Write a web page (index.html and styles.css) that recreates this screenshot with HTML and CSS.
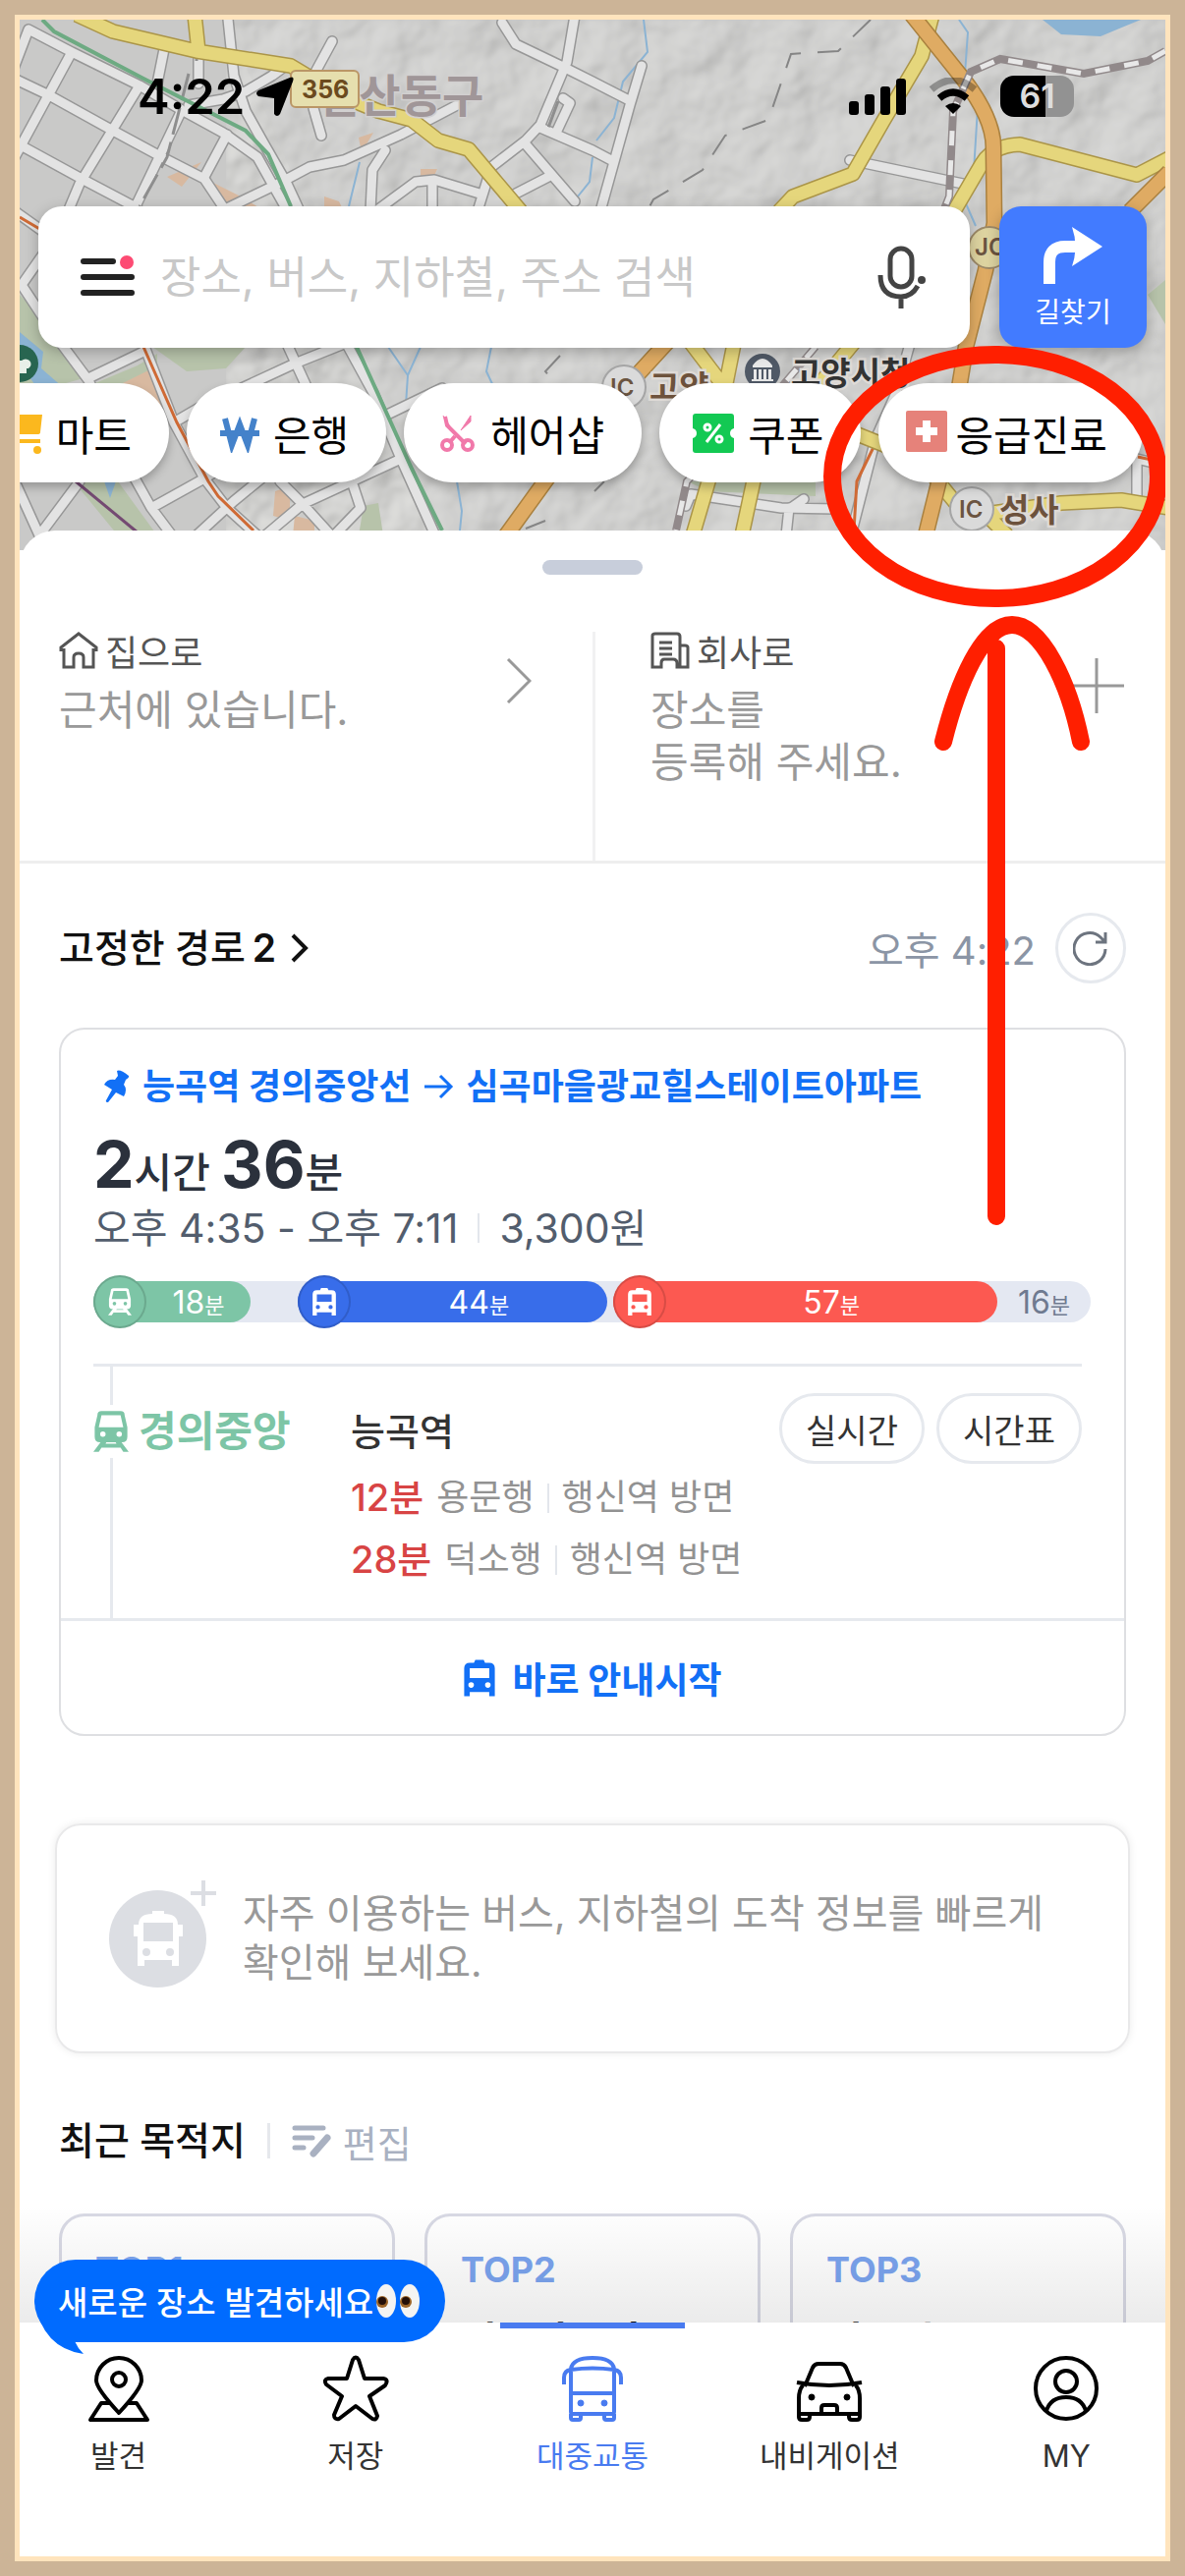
FILE: index.html
```html
<!DOCTYPE html>
<html lang="ko">
<head>
    <meta charset="UTF-8">
    <meta name="viewport" content="width=device-width, initial-scale=1.0">
    <title>대중교통</title>
    <link rel="stylesheet" href="styles.css">
</head>
<body>
  <!-- Shared icons -->
  <svg class="defs" aria-hidden="true">
    <symbol id="bus" viewBox="0 0 24 26">
      <path fill-rule="evenodd" d="M5 2h3l1-2h6l1 2h3q4 0 4 4v20h-4v-3H5v3H1V6q0-4 4-4zM5 6v7h14V6zM6 16a2 2 0 1 0 0 4a2 2 0 1 0 0-4zM18 16a2 2 0 1 0 0 4a2 2 0 1 0 0-4z"/>
    </symbol>
    <symbol id="train" viewBox="0 0 26 30">
      <path fill-rule="evenodd" d="M6 0h14q3 0 3 3l2 9v7q0 4-4 4H5q-4 0-4-4v-7l2-9q0-3 3-3zM6 3L4 12h18L20 3zM7 15a2 2 0 1 0 0 4a2 2 0 1 0 0-4zM19 15a2 2 0 1 0 0 4a2 2 0 1 0 0-4z"/>
      <path d="M6 22h4l-1 2h8l-1-2h4l6 8h-4l-2-3H6l-2 3H0z"/>
    </symbol>
  </svg>

  <div class="phone">
    <main>
      <!-- Map + search -->
      <header class="hero">
        <svg class="map" viewBox="20 20 1166 540" preserveAspectRatio="xMidYMin slice" aria-hidden="true">
          <defs>
            <filter id="relief" x="0" y="0" width="100%" height="100%">
              <feTurbulence type="fractalNoise" baseFrequency="0.014" numOctaves="4" seed="7"/>
              <feDiffuseLighting surfaceScale="9" diffuseConstant="1" lighting-color="#dededc">
                <feDistantLight azimuth="225" elevation="62"/>
              </feDiffuseLighting>
              <feGaussianBlur stdDeviation="2"/>
            </filter>
            <g id="roads" fill="none" stroke-linejoin="round" stroke-linecap="round">
              <path d="M29 30L73 53L142 87L185 112L227 135L262 160L277 187L290 210M29 30L10 80M73 53L15 160M142 87L81 187L65 225M185 112L138 210M10 78L50 97L115 133L165 160L208 182L230 215M10 142L85 183L140 212"/>
              <path d="M231 10L238 77L250 113L269 147L292 187L305 215M167 50L160 85M202 50V85M231 137L208 180M192 107L227 101L250 93L277 77L292 66M338 42L319 77M319 110L327 138M231 212L285 186L315 170L350 163L408 137L469 105M392 153L379 173L377 215M385 213L423 185L442 183L488 197M440 187V215M486 215L500 170L535 143L550 127L577 63L586 10"/>
              <path d="M511 23L525 45L573 68L603 83L642 103M550 130L603 153L622 163M535 147L585 205M525 197L558 180M573 100L580 105L566 135M653 67L641 107L611 215M865 163L980 187"/>
              <path d="M15 215L50 240M50 250L22 290L55 340L90 387L135 483L154 517L175 545M90 385L146 358M146 350L177 430L208 487L231 517L262 545M177 430L220 405L246 395L300 370L350 350M292 350L315 400M154 517L208 487L260 455M200 545L238 510L266 487M285 490L308 513L337 545M270 545L308 513L358 490L408 467M358 490L367 517L340 545M350 345L380 400L408 467L443 545M392 423L450 395M81 490L40 545M15 490L40 545"/>
              <path d="M926 350L912 400L891 447L866 545M703 503L795 517L850 518M703 503L698 515M803 517L800 545M805 517L818 508M1157 467V510M1157 467L1190 475"/>
            </g>
            <g id="yellow" fill="none" stroke-linejoin="round">
              <path d="M78 15L115 32L200 52L296 67L346 97L385 113L419 122L446 143L477 152L530 215M198 15L202 52"/>
              <path d="M949 15L938 57L899 123L868 177L807 200L793 215M968 220L999 167Q1010 148 1038 147L1157 178L1190 161"/>
              <path d="M700 345L738 395L748 345M872 345L835 390M724 480L705 545M769 480L755 545M870 441L900 453L949 483L975 515L1010 522L1080 512L1141 509L1190 517M1005 525L1025 545"/>
            </g>
            <g id="orange" fill="none" stroke-linejoin="round">
              <path d="M928 15L980 80Q1011 120 1011 150L1012 227L1003 275L983 353L976 395L958 480L942 545M1190 175L1150 215M682 345L650 380M562 480L515 545"/>
            </g>
          </defs>
          <rect x="20" y="20" width="1166" height="540" fill="#c9c9c8"/>
          <path d="M230 20H1186V560H440L350 300Z" filter="url(#relief)"/>
          <path d="M230 20H1186V560H440L350 300Z" fill="#cbcbca" opacity=".3"/>
          <g fill="#b7c3aa">
            <path d="M20 300L55 335L85 385L60 392H20ZM92 392L140 372L160 360V400ZM155 353H250L230 375L190 378ZM75 490H120L160 545H120ZM370 515L385 512L390 545H365ZM700 490H830V505L720 500Z"/>
            <path d="M1168 300L1186 285V330Z"/>
          </g>
          <g fill="#d8b9a0">
            <path d="M125 390L155 375L170 425H140ZM170 180L205 165L185 190ZM215 185L245 200L270 215H235ZM428 172H445L440 183H428ZM330 200L345 205L350 215H330ZM365 140L380 135L368 155ZM280 500L295 495V530L278 525ZM300 525L320 530V545H298Z"/>
          </g>
          <g fill="#8bb3d3">
            <path d="M1061 20L1080 35L1120 37L1161 20ZM20 338L44 358L42 375L65 395H38L20 370ZM106 490L112 507L118 490Z"/>
          </g>
          <path d="M655 20L659 53L634 83L625 120L607 143M603 160L600 185L588 200M976 20L985 33L982 75L995 110L990 190L982 205L993 230M395 353L415 382L428 353M415 382L413 412M500 353L495 378L503 395M465 490L470 520L468 540M366 165L355 210" fill="none" stroke="#8bb3d3" stroke-width="2"/>
          <use href="#roads" stroke="#979797" stroke-width="12"/>
          <use href="#roads" stroke="#e3e3e3" stroke-width="9"/>
          <path d="M200 20V62M192 75L170 160L142 210M568 103L558 130" fill="none" stroke="#8e8e8e" stroke-width="3" stroke-dasharray="28 8"/>
          <g fill="none" stroke="#cf6a35" stroke-width="3">
            <path d="M20 221L42 234M146 353L180 430L212 490L222 505L258 540M893 447L872 490L869 540M1158 465L1186 471"/>
          </g>
          <path d="M43 20L55 32L146 80L250 133L273 157L296 210M363 353L419 477L450 540" fill="none" stroke="#6daa82" stroke-width="4"/>
          <path d="M77 490L140 542" stroke="#744a72" stroke-width="3"/>
          <use href="#yellow" stroke="#ab9548" stroke-width="16"/>
          <use href="#yellow" stroke="#e5d67c" stroke-width="13"/>
          <use href="#orange" stroke="#a9803f" stroke-width="17"/>
          <use href="#orange" stroke="#dfab63" stroke-width="14"/>
          <g fill="none">
            <path d="M1186 52L1168 62L1103 75L1018 60L988 73L970 113L966 200L960 215M830 353L790 400L699 490L688 540" stroke="#91898a" stroke-width="8"/>
            <path d="M1186 52L1168 62L1103 75L1018 60L988 73L970 113L966 200L960 215M830 353L790 400L699 490L688 540" stroke="#e8e8e8" stroke-width="5" stroke-dasharray="15 15"/>
            <path d="M886 20L853 52L805 55L782 122L738 138L715 173L665 203L660 212M570 362L555 378L560 384M535 538L555 530M605 500L615 490" stroke="#858585" stroke-width="2" stroke-dasharray="25 17"/>
          </g>
          <circle cx="20" cy="370" r="19" fill="#286550"/>
          <path d="M20 376V367h2a6 6 0 0 1 8 0a5 5 0 0 1-1 8h-2v5h-7z" fill="#e8efe8"/>
          <circle cx="1007" cy="252" r="21" fill="#ddd3a0" stroke="#9c8968" stroke-width="2"/>
          <text class="badge-text" x="992" y="260">JC</text>
          <circle cx="635" cy="394" r="22" fill="#dadada" stroke="#a5a5a5" stroke-width="2"/>
          <text class="badge-text" x="621" y="403">IC</text>
          <text class="place brown" x="661" y="406">고양</text>
          <circle cx="776" cy="378" r="18" fill="#505966"/>
          <path d="M766 372q10-14 20 0v2h-20zM767 376h3v10h-3zM772 376h3v10h-3zM777 376h3v10h-3zM782 376h3v10h-3zM765 386h22v2h-22z" fill="#e8e8e8"/>
          <text class="place dark" x="805" y="392">고양시청</text>
          <circle cx="989" cy="518" r="22" fill="#dadada" stroke="#a5a5a5" stroke-width="2"/>
          <text class="badge-text" x="976" y="527">IC</text>
          <text class="place brown" x="1017" y="531">성사</text>
          <text class="district" x="323" y="114">일산동구</text>
          <rect x="296" y="72" width="69" height="37" rx="5" fill="#e6dfae" stroke="#ba9666" stroke-width="2"/>
          <text class="route-no" x="307" y="100">356</text>
        </svg>

        <div class="status">
          <div class="clock">
            <span>4:22</span>
            <svg width="38" height="40" viewBox="0 0 38 40"><path d="M34 1Q39-1 37 5L24 38q-3 4-6 0V22L2 20q-4-3 0-6z"/></svg>
          </div>
          <div class="signals">
            <svg width="58" height="38" viewBox="0 0 58 38"><rect y="24" width="10" height="14" rx="3"/><rect x="16" y="17" width="10" height="21" rx="3"/><rect x="32" y="9" width="10" height="29" rx="3"/><rect x="48" y="1" width="10" height="37" rx="3"/></svg>
            <svg width="50" height="38" viewBox="0 0 50 38"><path d="M3 12Q25-7 47 12" fill="none" stroke="#000" stroke-opacity=".3" stroke-width="7"/><path d="M11 21q14-12 28 0" fill="none" stroke="#000" stroke-width="7"/><path d="M17 29q8-6 16 0l-8 8z"/></svg>
            <div class="battery">61</div>
          </div>
        </div>

        <form class="search-row">
          <div class="search-box">
            <button type="button" class="plain" aria-label="메뉴">
              <svg width="56" height="44" viewBox="0 0 56 44"><path d="M4 6h30M4 22h49M4 38h49" stroke="#222" stroke-width="6" stroke-linecap="round"/><circle cx="48" cy="7" r="7" fill="#fd4b73"/></svg>
            </button>
            <input type="search" aria-label="검색" placeholder="장소, 버스, 지하철, 주소 검색">
            <button type="button" class="plain" aria-label="음성 검색">
              <svg width="50" height="64" viewBox="0 0 50 64" fill="none" stroke="#444" stroke-width="5"><rect x="13" y="3" width="22" height="39" rx="11"/><path d="M3 30q0 22 21 22q11 0 17-11M24 52v12"/><circle cx="45" cy="35" r="4" fill="#444" stroke="none"/></svg>
            </button>
          </div>
          <button type="button" class="directions">
            <svg width="60" height="60" viewBox="0 0 60 60"><path d="M6 58V36Q6 20 22 20H38" fill="none" stroke="#fff" stroke-width="12"/><path d="M29 0L60 20L29 40Q36 20 29 0Z" fill="#fff"/></svg>
            길찾기
          </button>
        </form>

        <div class="chips">
          <button type="button" class="chip"><svg width="42" height="46" viewBox="0 0 42 46" fill="#fbb81e"><path d="M4 4H42L40 22Q40 24 37 24H8ZM8 29H40V33H8Z"/><circle cx="14" cy="40" r="4"/><circle cx="37" cy="40" r="4"/></svg>마트</button>
          <button type="button" class="chip"><svg width="40" height="40" viewBox="0 0 40 40"><path d="M5 5L12 32L20 11L28 32L35 5M0 20H40" fill="none" stroke="#4482ca" stroke-width="6"/></svg>은행</button>
          <button type="button" class="chip"><svg width="40" height="40" viewBox="0 0 40 40" fill="none" stroke="#f179aa"><path d="M8 3L10 12L29 31M18 23L12 30" stroke-width="4"/><path d="M6 2L12 15L19 21M34 2V8L24 17Z" fill="#f179aa"/><circle cx="10" cy="32" r="5" stroke-width="4"/><circle cx="31" cy="32" r="5" stroke-width="4"/></svg>헤어샵</button>
          <button type="button" class="chip"><svg width="42" height="40" viewBox="2 0 42 40"><path d="M5 0H41Q44 0 44 3V15Q40 16 40 20T44 25V37Q44 40 41 40H5Q2 40 2 37V25Q6 24 6 20T2 15V3Q2 0 5 0Z" fill="#13c953"/><g fill="none" stroke="#fff" stroke-width="3"><circle cx="17" cy="14" r="3"/><circle cx="29" cy="26" r="3"/><path d="M30 11L16 29"/></g></svg>쿠폰</button>
          <button type="button" class="chip emergency"><svg width="42" height="46" viewBox="0 0 42 46"><rect width="42" height="42" rx="2" fill="#e6827a"/><path d="M21 10V32M10 21H32" stroke="#fff" stroke-width="8"/></svg>응급진료</button>
        </div>
      </header>

      <section class="sheet">
        <div class="handle"></div>

        <!-- Home / work shortcuts -->
        <div class="shortcuts">
          <a class="shortcut" href="#">
            <div>
              <h3><svg width="40" height="38" viewBox="0 0 40 38"><path d="M5 17V36H15V26Q15 22 20 22T25 26V36H35V17M2 20V16L20 2L38 16V20" /></svg>집으로</h3>
              <p>근처에 있습니다.</p>
            </div>
            <svg class="go" width="26" height="46" viewBox="0 0 26 46"><path d="M2 1L24 23L2 45"/></svg>
          </a>
          <a class="shortcut" href="#">
            <div>
              <h3><svg width="40" height="38" viewBox="0 0 40 38"><path d="M30 36H27V32Q27 28 23 28H14Q11 28 11 32V36H2V4Q2 2 5 2H27Q30 2 30 5V36H38V16Q38 14 35 14H30M9 11H22M9 17H22M9 23H22"/></svg>회사로</h3>
              <p>장소를<br>등록해 주세요.</p>
            </div>
            <svg class="go" width="56" height="56" viewBox="0 0 56 56"><path d="M28 0V56M0 28H56"/></svg>
          </a>
        </div>

        <!-- Pinned route -->
        <div class="section-head">
          <h2>고정한 경로<b>2</b><svg width="22" height="30" viewBox="0 0 22 30"><path d="M5 2L18 15L5 28" fill="none" stroke="#111" stroke-width="4"/></svg></h2>
          <div class="now">
            <time>오후 4:22</time>
            <button type="button" class="refresh" aria-label="새로고침"><svg width="36" height="36" viewBox="0 0 36 36" fill="none" stroke="#6d747f" stroke-width="3"><path d="M33 19A16 16 0 1 1 28 7L33 12M33 2V12H23"/></svg></button>
          </div>
        </div>

        <article class="route">
          <div class="route-body">
            <h4>
              <svg width="26" height="34" viewBox="0 0 26 34" fill="#1270f6"><path d="M13 1Q16-1 25 6Q26 8 22 10L20 15Q24 20 20 27L12 23L4 33Q1 33 2 31L8 20L0 15Q3 9 11 10L14 6Z"/></svg>
              능곡역 경의중앙선
              <svg width="30" height="26" viewBox="0 0 30 26" fill="none" stroke="#1270f6" stroke-width="3"><path d="M0 13H27M16 2L27 13L16 24"/></svg>
              심곡마을광교힐스테이트아파트
            </h4>
            <div class="duration"><b>2</b>시간 <b>36</b>분</div>
            <div class="detail">오후 4:35 - 오후 7:11<i></i>3,300원</div>

            <div class="bar">
              <div class="leg green" style="flex-grow: 160"><span class="dot"><svg width="24" height="28"><use href="#train"/></svg></span><span class="min">18<small>분</small></span></div>
              <div class="walk" style="flex-grow: 48"></div>
              <div class="leg blue" style="flex-grow: 314"><span class="dot"><svg width="26" height="28"><use href="#bus"/></svg></span><span class="min">44<small>분</small></span></div>
              <div class="walk" style="flex-grow: 6"></div>
              <div class="leg red" style="flex-grow: 391"><span class="dot"><svg width="26" height="28"><use href="#bus"/></svg></span><span class="min">57<small>분</small></span></div>
              <div class="walk" style="flex-grow: 95"><span class="min">16<small>분</small></span></div>
            </div>

            <div class="stop">
              <div class="line"><span><svg width="36" height="42"><use href="#train"/></svg>경의중앙</span></div>
              <div class="arrivals">
                <div class="station">능곡역
                  <div class="pills"><button type="button">실시간</button><button type="button">시간표</button></div>
                </div>
                <p><em>12분</em>용문행<i></i>행신역 방면</p>
                <p><em>28분</em>덕소행<i></i>행신역 방면</p>
              </div>
            </div>
          </div>
          <button type="button" class="start"><svg width="34" height="38"><use href="#bus"/></svg>바로 안내시작</button>
        </article>

        <div class="favorite">
          <div class="fav-icon">
            <svg width="50" height="56" viewBox="0 0 50 56"><path fill="#fff" fill-rule="evenodd" d="M19 0H31V3Q45 3 45 14H50V26H46V56H39V50H11V56H4V26H0V14H5Q5 3 19 3ZM10 12V31H40V12ZM13 38A4 4 0 1 0 13 46A4 4 0 1 0 13 38ZM37 38A4 4 0 1 0 37 46A4 4 0 1 0 37 38Z"/></svg>
            <svg class="add" width="26" height="26" viewBox="0 0 26 26"><path d="M13 0V26M0 13H26" stroke="#dcdee3" stroke-width="4"/></svg>
          </div>
          <p>자주 이용하는 버스, 지하철의 도착 정보를 빠르게<br>확인해 보세요.</p>
        </div>

        <!-- Recent destinations -->
        <div class="recent-head">
          <h2>최근 목적지</h2>
          <button type="button" class="plain"><svg width="40" height="34" viewBox="0 0 40 34" fill="none" stroke="#a9b1c1" stroke-linecap="round"><path d="M3 4H32M3 14H21M3 24H12" stroke-width="5"/><path d="M36 14L22 30" stroke-width="7"/></svg>편집</button>
        </div>
        <div class="recent">
          <a href="#"><strong>TOP1</strong></a>
          <a href="#"><strong>TOP2</strong>심곡마을광</a>
          <a href="#"><strong>TOP3</strong>서울시</a>
        </div>
      </section>
    </main>

    <nav class="tabs">
      <a href="#"><svg width="64" height="68" viewBox="0 0 64 68"><path d="M23 49H14L3 66H61L50 49H41M32 59Q9 34 9 26A23 23 0 0 1 55 26Q55 34 32 59Z"/><circle cx="32" cy="25" r="7"/></svg>발견</a>
      <a href="#"><svg width="68" height="68" viewBox="0 0 68 68"><path d="M31 5Q34 0 37 5L43 24H62Q68 25 64 31L48 42L56 62Q55 67 51 65L34 52L17 65Q12 66 12 61L20 42L4 30Q1 25 6 24H25Z"/></svg>저장</a>
      <a href="#" class="active"><svg width="68" height="68" viewBox="0 0 68 68"><path d="M12 58V14Q14 3 34 3T56 14V58Q56 60 53 60H15Q12 60 12 58ZM12 15Q34 12 56 15M12 39H56M12 15Q5 16 5 23V30M56 15Q63 16 63 23V30M12 60V64Q12 66 14 66H20Q22 66 22 64V60M46 60V64Q46 66 48 66H54Q56 66 56 64V60"/><circle class="lamp" cx="22" cy="49" r="3"/><circle class="lamp" cx="46" cy="49" r="3"/></svg>대중교통</a>
      <a href="#"><svg width="70" height="68" viewBox="0 0 70 68"><path d="M10 32L18 13Q20 9 24 9H46Q50 9 52 13L60 32M2 28Q35 34 68 28M8 31Q4 36 4 44V60H66V44Q66 36 62 31M4 58V63Q4 66 7 66H12Q15 66 15 63V60M55 60V63Q55 66 58 66H63Q66 66 66 63V58M27 59V54Q27 51 30 51H40Q43 51 43 54V59"/><circle class="lamp" cx="17" cy="43" r="3"/><circle class="lamp" cx="53" cy="43" r="3"/></svg>내비게이션</a>
      <a href="#"><svg width="68" height="68" viewBox="0 0 68 68"><circle cx="34" cy="34" r="31"/><circle cx="34" cy="27" r="11"/><path d="M14 57Q18 43 34 43T54 57"/></svg>MY</a>
    </nav>

    <div class="bubble">
      새로운 장소 발견하세요
      <svg width="46" height="36" viewBox="0 0 46 36"><ellipse cx="11" cy="18" rx="10" ry="17" fill="#f4f4f2"/><ellipse cx="35" cy="18" rx="10" ry="17" fill="#f4f4f2"/><circle cx="7" cy="19" r="6" fill="#9b6427"/><circle cx="31" cy="19" r="6" fill="#9b6427"/><circle cx="7" cy="18" r="4" fill="#241008"/><circle cx="31" cy="18" r="4" fill="#241008"/></svg>
      <svg class="tail" width="50" height="54" viewBox="0 0 50 54"><path d="M0 0Q8 48 50 54Q44 48 41 41H50V0Z" fill="#006bff"/></svg>
    </div>

    <!-- Hand-drawn marker -->
    <svg class="marker" viewBox="20 20 1166 1300" preserveAspectRatio="xMidYMin meet" fill="none" stroke="#ff1f00" stroke-width="18" stroke-linecap="round" aria-hidden="true">
      <ellipse cx="1013" cy="485" rx="166" ry="124"/>
      <path d="M1014 660V1238M960 755C975 695 1000 636 1030 636S1088 695 1100 755"/>
    </svg>
  </div>
</body>
</html>
```

FILE: styles.css
```css
* {
    margin: 0;
    padding: 0;
    box-sizing: border-box;
}
body {
    font-family: Inter, "Noto Sans CJK KR", sans-serif;
    background-color: #ccb497;
    color: #222;
    padding: 15px;
}
button, input {
    font-family: inherit;
    border: none;
    background: none;
}
button {
    cursor: pointer;
}
a {
    color: inherit;
    text-decoration: none;
}
svg {
    flex: none;
}
.defs {
    position: absolute;
    width: 0;
    height: 0;
}
.phone {
    position: relative;
    display: flex;
    flex-direction: column;
    height: calc(100vh - 30px);
    border: 5px solid #ffe4bd;
    background-color: #fff;
    overflow: hidden;
}
main {
    position: relative;
    flex: 1;
    min-height: 0;
    overflow: hidden;
}
/* shade above the tab bar */
main::after {
    content: "";
    position: absolute;
    left: 0;
    right: 0;
    bottom: 0;
    height: 120px;
    background: linear-gradient(rgba(0, 0, 0, 0), rgba(0, 0, 0, 0.08));
}

/* Map header */
.hero {
    position: relative;
    padding: 56px 19px 69px;
}
.map {
    position: absolute;
    top: 0;
    left: 0;
    width: 100%;
    height: 100%;
}
.badge-text {
    font-size: 24px;
    font-weight: 600;
    fill: #6b5440;
}
.place {
    font-size: 33px;
    font-weight: 700;
    stroke: #dedad6;
    stroke-width: 5px;
    paint-order: stroke;
}
.brown {
    fill: #6d523c;
}
.dark {
    fill: #333;
}
.district {
    font-size: 46px;
    font-weight: 700;
    fill: #a09698;
    stroke: #d2d0d0;
    stroke-width: 3px;
    paint-order: stroke;
}
.route-no {
    font-size: 25px;
    font-weight: 700;
    fill: #6b4a1e;
}
.status {
    position: relative;
    display: flex;
    justify-content: space-between;
    align-items: center;
    height: 44px;
    padding: 0 74px 0 101px;
    color: #000;
}
.clock, .signals {
    display: flex;
    align-items: center;
}
.clock {
    gap: 12px;
    font-size: 49px;
    font-weight: 600;
}
.signals {
    gap: 23px;
}
.battery {
    width: 75px;
    height: 42px;
    border-radius: 14px;
    background: linear-gradient(90deg, #000 62%, #929292 62%);
    color: #ddd;
    font-size: 34px;
    line-height: 42px;
    font-weight: 600;
    text-align: center;
}
.search-row {
    position: relative;
    display: flex;
    gap: 30px;
    margin-top: 90px;
}
.search-box {
    flex: 1;
    min-width: 0;
    display: flex;
    align-items: center;
    height: 144px;
    padding: 0 44px 0 42px;
    border-radius: 24px;
    background-color: #fff;
    box-shadow: 0 4px 14px rgba(0, 0, 0, 0.25);
}
.search-box input {
    flex: 1;
    min-width: 0;
    margin-left: 26px;
    font-size: 45px;
    color: #222;
    outline: none;
}
.search-box input::placeholder {
    color: #c8c8c8;
}
.plain {
    display: flex;
    align-items: center;
}
.directions {
    display: flex;
    flex-direction: column;
    align-items: center;
    justify-content: center;
    gap: 11px;
    width: 150px;
    border-radius: 22px;
    background-color: #427bff;
    box-shadow: 0 4px 14px rgba(0, 0, 0, 0.25);
    color: #fff;
    font-size: 28px;
    line-height: 32px;
}
.chips {
    position: relative;
    display: flex;
    justify-content: flex-end;
    gap: 18px;
    margin: 36px 4px 0 -60px;
}
.chip {
    display: flex;
    align-items: center;
    gap: 14px;
    height: 101px;
    padding: 0 38px 0 34px;
    border-radius: 51px;
    background-color: #fff;
    box-shadow: 0 5px 10px rgba(0, 0, 0, 0.25);
    color: #000;
    font-size: 42px;
    white-space: nowrap;
}
.emergency {
    gap: 8px;
    padding: 0 36px 0 28px;
}

/* Bottom sheet */
.sheet {
    position: relative;
    margin-top: -20px;
    padding-top: 30px;
    border-radius: 36px 36px 0 0;
    background-color: #fff;
}
.handle {
    width: 102px;
    height: 15px;
    margin: 0 auto;
    border-radius: 8px;
    background-color: #c8cedb;
}
.shortcuts {
    display: grid;
    grid-template-columns: 1fr 1fr;
    padding-top: 58px;
    border-bottom: 3px solid #eee;
}
.shortcut {
    display: flex;
    justify-content: space-between;
    height: 233px;
    padding: 0 62px 0 40px;
}
.shortcut + .shortcut {
    border-left: 3px solid #f1f1f2;
    padding: 0 42px 0 56px;
}
.shortcut h3 {
    display: flex;
    align-items: center;
    gap: 7px;
    height: 38px;
    font-size: 36px;
    font-weight: 400;
    color: #555;
}
.shortcut h3 svg {
    fill: none;
    stroke: #555;
    stroke-width: 3px;
}
.shortcut p {
    margin-top: 15px;
    font-size: 42px;
    line-height: 53px;
    color: #999;
}
.go {
    margin-top: 27px;
    fill: none;
    stroke: #999;
    stroke-width: 3px;
}
.section-head {
    display: flex;
    justify-content: space-between;
    align-items: center;
    padding: 50px 40px 45px;
}
h2 {
    display: flex;
    align-items: center;
    font-size: 39px;
    line-height: 48px;
    font-weight: 500;
    color: #111;
}
h2 b {
    margin: 0 12px 0 7px;
    font-weight: 600;
}
.now {
    display: flex;
    align-items: center;
    gap: 20px;
    font-size: 40px;
    color: #8b95a5;
}
.refresh {
    display: flex;
    align-items: center;
    justify-content: center;
    width: 72px;
    height: 72px;
    border: 3px solid #e6e9ee;
    border-radius: 36px;
}

/* Route card */
.route {
    margin: 0 40px;
    border: 2px solid #dedfe2;
    border-radius: 26px;
}
.route-body {
    padding: 32px 43px 0 33px;
}
.route h4 {
    display: flex;
    align-items: center;
    gap: 13px;
    padding-left: 11px;
    font-size: 36px;
    line-height: 52px;
    font-weight: 700;
    color: #1270f6;
    white-space: nowrap;
}
.duration {
    margin-top: 18px;
    font-size: 42px;
    line-height: 70px;
    font-weight: 500;
    color: #2b313c;
}
.duration b {
    font-size: 66px;
    font-weight: 700;
}
.detail {
    display: flex;
    align-items: center;
    font-size: 41px;
    line-height: 42px;
    color: #525d6d;
}
.detail i, .arrivals i {
    width: 2px;
    height: 30px;
    margin: 0 20px;
    background-color: #e3e6ec;
}
.bar {
    display: flex;
    align-items: center;
    height: 42px;
    margin: 33px -9px 0 0;
    border-radius: 21px;
    background-color: #e4e8f2;
}
.leg, .walk {
    flex: 0 1 0;
    display: flex;
    align-items: center;
    height: 42px;
}
.leg {
    border-radius: 21px;
    color: #fff;
}
.walk {
    color: #6f7a90;
}
.dot {
    display: flex;
    align-items: center;
    justify-content: center;
    flex: none;
    width: 54px;
    height: 54px;
    border: 2px solid rgba(0, 0, 0, 0.14);
    border-radius: 27px;
    fill: #fff;
}
.green, .green .dot {
    background-color: #7dc5a6;
}
.blue, .blue .dot {
    background-color: #386dea;
}
.red, .red .dot {
    background-color: #fc5951;
}
.min {
    flex: 1;
    font-size: 32px;
    text-align: center;
    white-space: nowrap;
}
.min small {
    font-size: 22px;
}
.stop {
    display: flex;
    margin-top: 42px;
    border-top: 3px solid #e6e9ee;
}
.line {
    width: 262px;
    padding-top: 39px;
    background: linear-gradient(#e6e9ee, #e6e9ee) 17px 0 / 3px 100% no-repeat;
}
.line span {
    display: flex;
    align-items: center;
    gap: 10px;
    height: 54px;
    line-height: 50px;
    background-color: #fff;
    color: #7dc5a6;
    fill: #7dc5a6;
    font-size: 42px;
    font-weight: 700;
}
.arrivals {
    flex: 1;
    padding: 27px 0 28px;
}
.station {
    display: flex;
    justify-content: space-between;
    align-items: center;
    margin-bottom: 3px;
    font-size: 38px;
    font-weight: 500;
    color: #333;
}
.pills {
    display: flex;
    gap: 12px;
}
.pills button {
    width: 148px;
    height: 72px;
    border: 3px solid #e6e9ee;
    border-radius: 36px;
    font-size: 34px;
    color: #333;
}
.arrivals p {
    display: flex;
    align-items: center;
    font-size: 36px;
    line-height: 63px;
    color: #929292;
}
.arrivals em {
    margin-right: 13px;
    font-size: 38px;
    font-style: normal;
    font-weight: 500;
    color: #d84444;
}
.arrivals i {
    margin: 0 13px;
}
.start {
    display: flex;
    align-items: center;
    justify-content: center;
    gap: 16px;
    width: 100%;
    height: 118px;
    border-top: 3px solid #e6e9ee;
    font-size: 37px;
    font-weight: 700;
    color: #1270f6;
    fill: #1270f6;
}

/* Favorite banner */
.favorite {
    display: flex;
    align-items: center;
    gap: 37px;
    height: 234px;
    margin: 89px 36px 0;
    padding-left: 53px;
    border-radius: 26px;
    border: 2px solid #e9e9ea;
    box-shadow: 0 0 8px rgba(0, 0, 0, 0.08);
}
.fav-icon {
    position: relative;
    display: flex;
    align-items: center;
    justify-content: center;
    width: 99px;
    height: 99px;
    border-radius: 50%;
    background-color: #dcdee3;
}
.add {
    position: absolute;
    top: -10px;
    right: -10px;
}
.favorite p {
    font-size: 40px;
    line-height: 50px;
    color: #999;
}

/* Recent destinations */
.recent-head {
    display: flex;
    align-items: center;
    padding: 65px 40px 50px;
}
.recent-head button {
    gap: 12px;
    height: 36px;
    margin-left: 22px;
    padding-left: 22px;
    border-left: 3px solid #e6e8ec;
    font-size: 38px;
    color: #a9b1c1;
}
.recent {
    display: grid;
    grid-template-columns: repeat(3, 1fr);
    gap: 30px;
    padding: 0 40px;
}
.recent a {
    height: 230px;
    padding: 32px 34px;
    border: 3px solid #d8d9e4;
    border-radius: 26px;
    font-size: 40px;
    line-height: 54px;
    font-weight: 700;
    color: #111;
}
.recent strong {
    display: block;
    margin-bottom: 24px;
    font-size: 36px;
    line-height: 44px;
    font-weight: 700;
    color: #7ba4ef;
}

/* Tab bar */
.tabs {
    position: relative;
    display: grid;
    grid-template-columns: repeat(5, 1fr);
    height: 238px;
    margin: 0 -20px;
    background-color: #fff;
}
.tabs a {
    position: relative;
    display: flex;
    flex-direction: column;
    align-items: center;
    gap: 14px;
    padding-top: 33px;
    font-size: 31px;
    line-height: 42px;
    color: #333;
}
.tabs svg {
    fill: none;
    stroke: #000;
    stroke-width: 4px;
    stroke-linejoin: round;
}
.tabs .lamp {
    fill: #000;
    stroke-width: 1px;
}
.tabs .active {
    color: #497bf0;
}
.tabs .active svg {
    stroke: #497bf0;
}
.tabs .active .lamp {
    fill: #497bf0;
}
.tabs .active::before {
    content: "";
    position: absolute;
    top: 0;
    width: 188px;
    height: 6px;
    background-color: #497bf0;
}

/* Tooltip over the tabs */
.bubble {
    position: absolute;
    left: 15px;
    bottom: 218px;
    z-index: 1;
    display: flex;
    align-items: center;
    gap: 2px;
    height: 84px;
    padding: 0 25px 0 24px;
    border-radius: 42px;
    background-color: #006bff;
    color: #fff;
    font-size: 33px;
    font-weight: 500;
}
.tail {
    position: absolute;
    left: 0;
    bottom: -12px;
    z-index: -1;
}
.marker {
    position: absolute;
    top: 0;
    left: 0;
    width: 100%;
    pointer-events: none;
}
```
